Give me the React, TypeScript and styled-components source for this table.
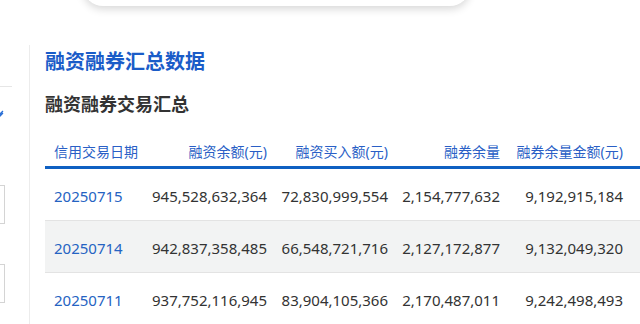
import React from "react";
import styled, { createGlobalStyle } from "styled-components";

const GlobalStyle = createGlobalStyle`
    html, body {
        margin: 0;
        padding: 0;
        background: #ffffff;
        overflow: hidden;
    }
    body {
        font-family: "Noto Sans", "Noto Sans CJK SC", sans-serif;
    }
`;

const COLUMNS = "98px 134px 121px 112px 123px 1fr";

const Page = styled.div`
    position: relative;
    display: flex;
    width: 640px;
    height: 324px;
    overflow: hidden;
`;

const SearchCard = styled.div`
    position: absolute;
    left: 83px;
    top: -50px;
    width: 387px;
    height: 56px;
    background: #ffffff;
    border-radius: 20px;
    box-shadow: 0 3px 9px rgba(0, 0, 0, 0.16);
    z-index: 2;
`;

const Sidebar = styled.aside`
    flex: 0 0 29px;
    margin-top: 45px;
    border-right: 1px solid #ececec;
    display: flex;
    flex-direction: column;
    overflow: hidden;
`;

const SideDivider = styled.div`
    width: 12px;
    height: 1px;
    margin-top: 41px;
    background: #e6e6e6;
`;

const SideMark = styled.div`
    margin-top: 14px;
    margin-left: -4px;
    width: 8px;
    height: 8px;
`;

const SideInput = styled.div<{ $top: number }>`
    margin-top: ${(p) => p.$top}px;
    width: 4px;
    height: 37px;
    border: 1px solid #d4d4d4;
    border-left: none;
`;

const Main = styled.main`
    flex: 1;
    min-width: 0;
    padding-left: 15px;
    display: flex;
    flex-direction: column;
`;

const Title = styled.h1`
    margin: 48px 0 0;
    font-size: 20px;
    line-height: 28px;
    font-weight: 700;
    color: #1a5cc8;
    letter-spacing: 0;
`;

const SubTitle = styled.h2`
    margin: 15px 0 0;
    font-size: 18px;
    line-height: 26px;
    font-weight: 700;
    color: #333333;
`;

const Table = styled.div`
    margin-top: 19px;
    display: flex;
    flex-direction: column;
`;

const HeadRow = styled.div`
    display: grid;
    grid-template-columns: ${COLUMNS};
    height: 30px;
    align-items: center;
    border-bottom: 3px solid #0f60c2;
`;

const HeadCell = styled.div<{ $left?: boolean }>`
    font-size: 14px;
    color: #2a5fc6;
    text-align: ${(p) => (p.$left ? "left" : "right")};
    padding: ${(p) => (p.$left ? "0 0 0 9px" : "0 10px 0 0")};
    white-space: nowrap;
`;

const Row = styled.div<{ $striped?: boolean }>`
    display: grid;
    grid-template-columns: ${COLUMNS};
    height: 52px;
    padding-top: 3px;
    box-sizing: border-box;
    align-items: center;
    background: ${(p) => (p.$striped ? "#f2f3f3" : "#ffffff")};
    border-bottom: 1px solid #e3e3e3;
`;

const Cell = styled.div`
    font-size: 15px;
    color: #333333;
    text-align: right;
    padding-right: 10px;
    white-space: nowrap;
`;

const DateCell = styled.div`
    font-size: 15px;
    color: #2563c2;
    padding-left: 9px;
    white-space: nowrap;
`;

const headers = ["融资余额(元)", "融资买入额(元)", "融券余量", "融券余量金额(元)"];

const rows = [
    ["20250715", "945,528,632,364", "72,830,999,554", "2,154,777,632", "9,192,915,184"],
    ["20250714", "942,837,358,485", "66,548,721,716", "2,127,172,877", "9,132,049,320"],
    ["20250711", "937,752,116,945", "83,904,105,366", "2,170,487,011", "9,242,498,493"],
];

export default function App() {
    return (
        <>
            <GlobalStyle />
            <Page>
                <SearchCard />
                <Sidebar>
                    <SideDivider />
                    <SideMark>
                        <svg width="8" height="8" viewBox="0 0 8 8">
                            <path d="M1 7 L7 1 M3 7 L7 3" stroke="#2a6fd6" strokeWidth="1.3" fill="none" />
                        </svg>
                    </SideMark>
                    <SideInput $top={76} />
                    <SideInput $top={40} />
                </Sidebar>
                <Main>
                    <Title>融资融券汇总数据</Title>
                    <SubTitle>融资融券交易汇总</SubTitle>
                    <Table>
                        <HeadRow>
                            <HeadCell $left>信用交易日期</HeadCell>
                            {headers.map((h) => (
                                <HeadCell key={h}>{h}</HeadCell>
                            ))}
                            <div />
                        </HeadRow>
                        {rows.map((r, i) => (
                            <Row key={r[0]} $striped={i % 2 === 1}>
                                <DateCell>{r[0]}</DateCell>
                                {r.slice(1).map((v, j) => (
                                    <Cell key={j}>{v}</Cell>
                                ))}
                                <div />
                            </Row>
                        ))}
                    </Table>
                </Main>
            </Page>
        </>
    );
}
